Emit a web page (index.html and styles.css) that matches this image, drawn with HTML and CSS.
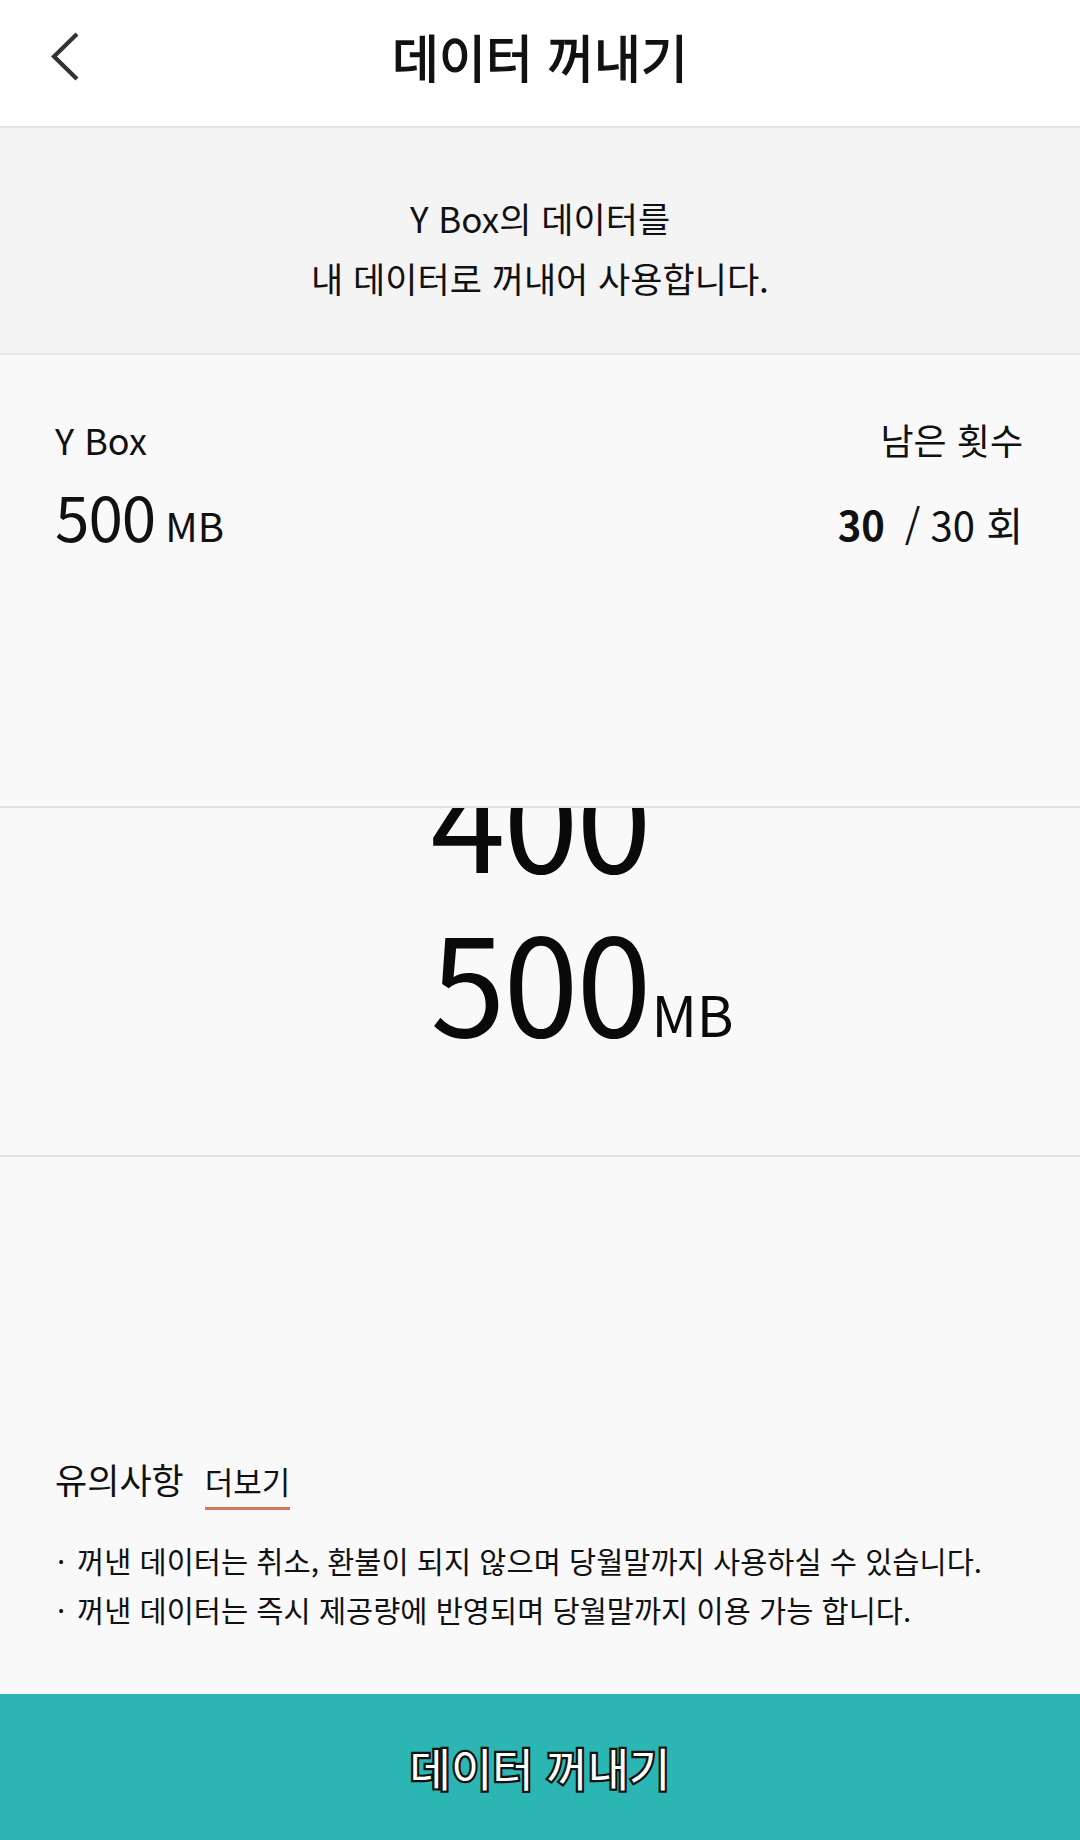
FILE: index.html
```html
<!DOCTYPE html>
<html lang="ko">
<head>
<meta charset="utf-8">
<title>데이터 꺼내기</title>
<link rel="stylesheet" href="styles.css">
</head>
<body>
<div class="screen">
  <header class="topbar">
    <div class="topbar-row">
      <button class="back" aria-label="뒤로">
        <svg width="32" height="50" viewBox="0 0 32 50"><polyline points="27,3 4,25.5 27,48" fill="none" stroke="#333" stroke-width="4.2"/></svg>
      </button>
      <h1 class="title">데이터 꺼내기</h1>
      <span class="spacer"></span>
    </div>
  </header>

  <section class="intro">
    <p>Y Box의 데이터를</p>
    <p>내 데이터로 꺼내어 사용합니다.</p>
  </section>

  <section class="info">
    <div class="info-col">
      <div class="label">Y Box</div>
      <div class="amount"><span class="num">500</span><span class="unit">MB</span></div>
    </div>
    <div class="info-col right">
      <div class="label">남은 횟수</div>
      <div class="count"><b>30</b><span class="slash">/</span><span>30 회</span></div>
    </div>
  </section>

  <section class="picker">
    <div class="picker-list">
      <div class="picker-row"><span></span><span class="pnum">400</span><span></span></div>
      <div class="picker-row"><span></span><span class="pnum">500</span><span class="punit">MB</span></div>
    </div>
  </section>

  <section class="notes">
    <div class="notes-head">
      <span class="notes-title">유의사항</span>
      <span class="more">더보기</span>
    </div>
    <ul class="notes-list">
      <li><span class="dot">·</span><span>꺼낸 데이터는 취소, 환불이 되지 않으며 당월말까지 사용하실 수 있습니다.</span></li>
      <li><span class="dot">·</span><span>꺼낸 데이터는 즉시 제공량에 반영되며 당월말까지 이용 가능 합니다.</span></li>
    </ul>
  </section>

  <button class="cta">데이터 꺼내기</button>
</div>
</body>
</html>
```

FILE: styles.css
```css
* { box-sizing: border-box; }

html, body {
  margin: 0;
  padding: 0;
}

body {
  font-family: "Noto Sans CJK KR", "Noto Sans", sans-serif;
  color: #111;
  background: #f9f9f9;
}

.screen {
  width: 1080px;
  height: 1840px;
  display: flex;
  flex-direction: column;
  overflow: hidden;
}

/* Header */
.topbar {
  height: 128px;
  background: #fff;
  border-bottom: 2px solid #e2e2e2;
  flex: none;
}

.topbar-row {
  display: grid;
  grid-template-columns: 120px 1fr 120px;
  align-items: center;
  height: 60px;
  margin-top: 26px;
}

.back {
  border: 0;
  background: none;
  padding: 0 0 0 50px;
  height: 60px;
  display: flex;
  align-items: center;
  justify-content: flex-start;
}

.title {
  margin: 0;
  text-align: center;
  font-size: 51px;
  font-weight: 400;
  line-height: 60px;
  letter-spacing: 0;
  color: #111;
  -webkit-text-stroke: 1.3px #111;
}

/* Intro band */
.intro {
  flex: none;
  height: 227px;
  background: #f4f4f4;
  border-bottom: 2px solid #e8e8e8;
  padding-top: 60px;
  text-align: center;
}

.intro p {
  margin: 0;
  font-size: 35px;
  line-height: 60px;
  color: #111;
}

/* Info card */
.info {
  flex: none;
  height: 451px;
  background: #f9f9f9;
  display: flex;
  justify-content: space-between;
  padding: 62px 57px 0 55px;
}

.info-col {
  display: flex;
  flex-direction: column;
}

.info-col.right {
  align-items: flex-end;
}

.label {
  font-size: 36px;
  line-height: 44px;
}

.amount {
  margin-top: 22px;
  line-height: 64px;
  display: flex;
  align-items: baseline;
  gap: 10px;
}

.amount .num {
  font-size: 62px;
  letter-spacing: -1px;
}

.amount .unit {
  font-size: 40px;
}

.count {
  margin-top: 31px;
  line-height: 64px;
  font-size: 40px;
  display: flex;
  align-items: baseline;
}

.count b {
  font-weight: 700;
  font-size: 40px;
}

.count .slash {
  margin: 0 10px 0 20px;
}

/* Picker */
.picker {
  flex: none;
  height: 351px;
  border-top: 2px solid #e2e2e2;
  border-bottom: 2px solid #e3e3e3;
  background: #f9f9f9;
  overflow: hidden;
}

.picker-list {
  margin-top: -76px;
}

.picker-row {
  height: 164px;
  display: grid;
  grid-template-columns: 1fr auto 1fr;
  align-items: baseline;
  line-height: 164px;
}

.pnum {
  font-size: 135px;
  letter-spacing: -2px;
  color: #0a0a0a;
}

.punit {
  font-size: 56px;
  padding-left: 2px;
  color: #0a0a0a;
}

/* Notes */
.notes {
  flex: 1;
  display: flex;
  flex-direction: column;
  justify-content: flex-end;
  padding: 0 30px 60px 55px;
  background: #f9f9f9;
}

.notes-head {
  display: flex;
  align-items: baseline;
  gap: 21px;
  line-height: 44px;
}

.notes-title {
  font-size: 35px;
}

.more {
  font-size: 31px;
  line-height: 36px;
  padding-bottom: 8px;
  border-bottom: 3px solid #d4785c;
}

.notes-list {
  list-style: none;
  margin: 26px 0 0 0;
  padding: 0;
}

.notes-list li {
  display: flex;
  font-size: 29.5px;
  line-height: 49px;
  color: #111;
}

.notes-list .dot {
  width: 22px;
  flex: none;
  padding-left: 2px;
}

/* CTA */
.cta {
  flex: none;
  height: 146px;
  width: 100%;
  border: 0;
  margin: 0;
  background: #2bb6b3;
  font-family: "Noto Sans CJK KR", "Noto Sans", sans-serif;
  font-size: 45px;
  font-weight: 400;
  color: #fff;
  -webkit-text-stroke: 4.5px #111;
  paint-order: stroke fill;
}
```
